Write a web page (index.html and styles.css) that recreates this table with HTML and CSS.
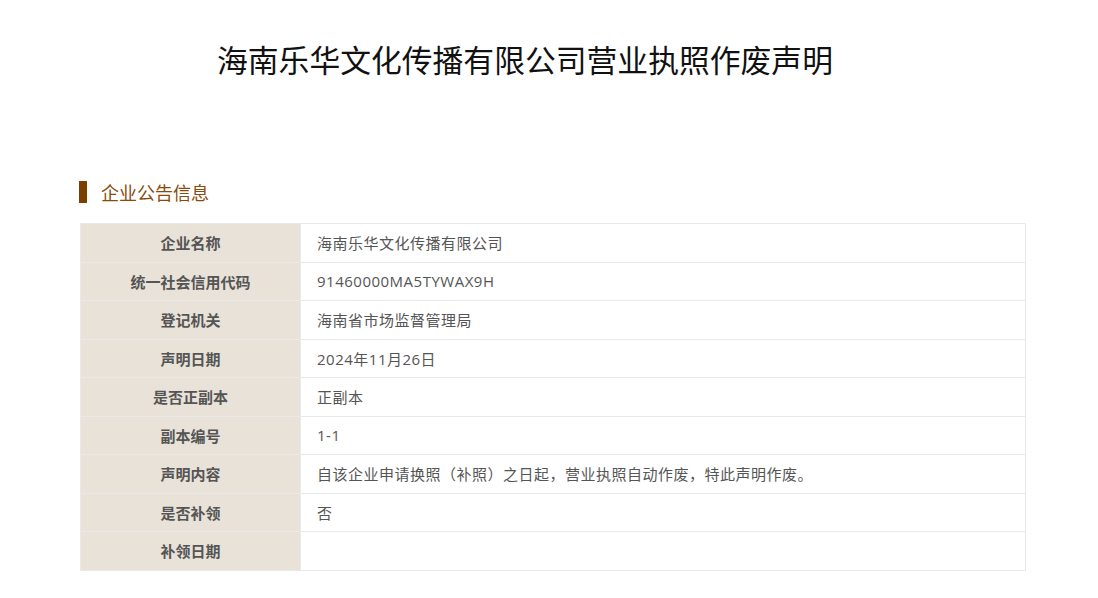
FILE: index.html
```html
<!DOCTYPE html>
<html lang="zh-CN">
<head>
  <meta charset="UTF-8">
  <title>海南乐华文化传播有限公司营业执照作废声明</title>
  <link rel="stylesheet" href="styles.css">
</head>
<body>

  <div class="page">
    <h1 class="title">海南乐华文化传播有限公司营业执照作废声明</h1>

    <div class="section">
      <h2 class="section-title"><span class="bar"></span>企业公告信息</h2>

      <table class="info">
        <tbody>
          <tr><th>企业名称</th><td>海南乐华文化传播有限公司</td></tr>
          <tr><th>统一社会信用代码</th><td>91460000MA5TYWAX9H</td></tr>
          <tr><th>登记机关</th><td>海南省市场监督管理局</td></tr>
          <tr><th>声明日期</th><td>2024年11月26日</td></tr>
          <tr><th>是否正副本</th><td>正副本</td></tr>
          <tr><th>副本编号</th><td>1-1</td></tr>
          <tr><th>声明内容</th><td>自该企业申请换照（补照）之日起，营业执照自动作废，特此声明作废。</td></tr>
          <tr><th>是否补领</th><td>否</td></tr>
          <tr><th>补领日期</th><td></td></tr>
        </tbody>
      </table>
    </div>
  </div>

</body>
</html>
```

FILE: styles.css
```css
body {
  margin: 0;
  background: #fff;
  color: #555;
  font-family: "Noto Sans CJK SC", "Open Sans", sans-serif;
}
.page {
  padding: 0 72px 0 80px;
}
.title {
  margin: 0;
  padding: 39px 0 0 137px;
  font-size: 30.8px;
  line-height: 40px;
  font-weight: normal;
  color: #111;
}
.section {
  padding-top: 101px;
}
.section-title {
  display: flex;
  align-items: center;
  margin: 0 0 19px -1px;
  height: 24px;
  font-size: 18px;
  font-weight: normal;
  color: #8a4a0c;
}
.bar {
  width: 8px;
  height: 22px;
  background: #7b3f00;
  margin-right: 14px;
}
.info {
  width: 100%;
  border-collapse: collapse;
  font-size: 15px;
}
.info th, .info td {
  border: 1px solid #e9e9e9;
  height: 37.5px;
  padding: 0;
}
.info th {
  width: 219px;
  background: #e8e2d8;
  color: #555;
  font-weight: bold;
  text-align: center;
}
.info td {
  padding-left: 16px;
  color: #555;
  font-family: "Open Sans", "Noto Sans CJK SC", sans-serif;
  letter-spacing: 0.5px;
}
```
